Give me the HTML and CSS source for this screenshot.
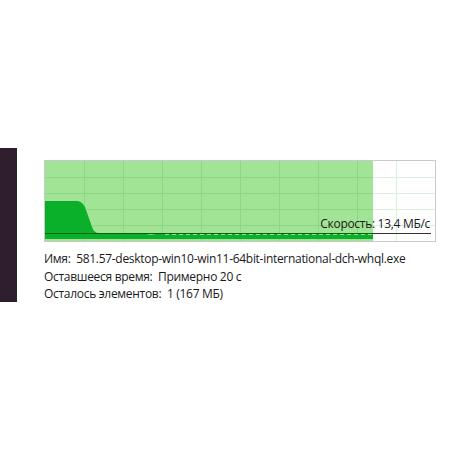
FILE: index.html
```html
<!DOCTYPE html>
<html>
<head>
<meta charset="utf-8">
<link rel="stylesheet" href="styles.css">
</head>
<body>
<div class="page">
  <div class="strip"></div>
  <div class="content">
    <div class="graph">
      <svg class="chart" width="390" height="80" viewBox="0 0 390 80">
        <rect x="0" y="0" width="390" height="80" fill="#ffffff"/>
        <rect x="0" y="0" width="328" height="80" fill="#a2e495"/>
        <g stroke="#dcefdc" stroke-width="1">
          <line x1="328" y1="16.5" x2="390" y2="16.5"/>
          <line x1="328" y1="32.5" x2="390" y2="32.5"/>
          <line x1="328" y1="48.5" x2="390" y2="48.5"/>
          <line x1="328" y1="64.5" x2="390" y2="64.5"/>
          <line x1="351.5" y1="0" x2="351.5" y2="80"/>
        </g>
        <g stroke="#8fd782" stroke-width="1">
          <line x1="0" y1="16.5" x2="328" y2="16.5"/>
          <line x1="0" y1="32.5" x2="328" y2="32.5"/>
          <line x1="0" y1="48.5" x2="328" y2="48.5"/>
          <line x1="0" y1="64.5" x2="328" y2="64.5"/>
          <line x1="39.5" y1="0" x2="39.5" y2="80"/>
          <line x1="78.5" y1="0" x2="78.5" y2="80"/>
          <line x1="117.5" y1="0" x2="117.5" y2="80"/>
          <line x1="156.5" y1="0" x2="156.5" y2="80"/>
          <line x1="195.5" y1="0" x2="195.5" y2="80"/>
          <line x1="234.5" y1="0" x2="234.5" y2="80"/>
          <line x1="273.5" y1="0" x2="273.5" y2="80"/>
          <line x1="312.5" y1="0" x2="312.5" y2="80"/>
        </g>
        <path d="M0 40 L32 40 Q37 40 40 46 L47 66 Q49 72 54 72 L328 72 L328 78 L0 78 Z" fill="#0bb02a"/>
        <path d="M100 72 Q106 76 112 72 Z" fill="#8fd782"/>
        <line x1="0" y1="72.5" x2="328" y2="72.5" stroke="#0a5f18" stroke-width="1.2"/>
        <line x1="120" y1="73.5" x2="328" y2="73.5" stroke="#9fe08f" stroke-width="1" stroke-dasharray="4 3"/>
        <line x1="328" y1="72.5" x2="386" y2="72.5" stroke="#333333" stroke-width="1.2"/>
      </svg>
      <div class="speed">Скорость: 13,4 МБ/с</div>
    </div>
    <div class="info">
      <div class="row">Имя:&nbsp; 581.57-desktop-win10-win11-64bit-international-dch-whql.exe</div>
      <div class="row">Оставшееся время:&nbsp; Примерно 20 с</div>
      <div class="row">Осталось элементов:&nbsp; 1 (167 МБ)</div>
    </div>
  </div>
</div>
</body>
</html>
```

FILE: styles.css
```css
html, body {
  margin: 0;
  padding: 0;
  background: #ffffff;
}
.page {
  display: flex;
  width: 452px;
  height: 452px;
  font-family: "Open Sans", "Noto Sans", sans-serif;
  color: #1a1a1a;
  letter-spacing: -0.3px;
}
.strip {
  width: 17px;
  height: 154px;
  margin-top: 148px;
  background: #2f1e2d;
  flex: none;
}
.content {
  padding-left: 27px;
  padding-top: 160px;
}
.graph {
  position: relative;
  width: 390px;
  height: 80px;
  border: 1px solid #c9c9c9;
}
.chart {
  display: block;
}
.speed {
  position: absolute;
  right: 5px;
  top: 54px;
  font-size: 12px;
  line-height: 18px;
  color: #1a1a1a;
}
.info {
  margin-top: 8px;
  font-size: 12px;
  line-height: 17.5px;
}
```
